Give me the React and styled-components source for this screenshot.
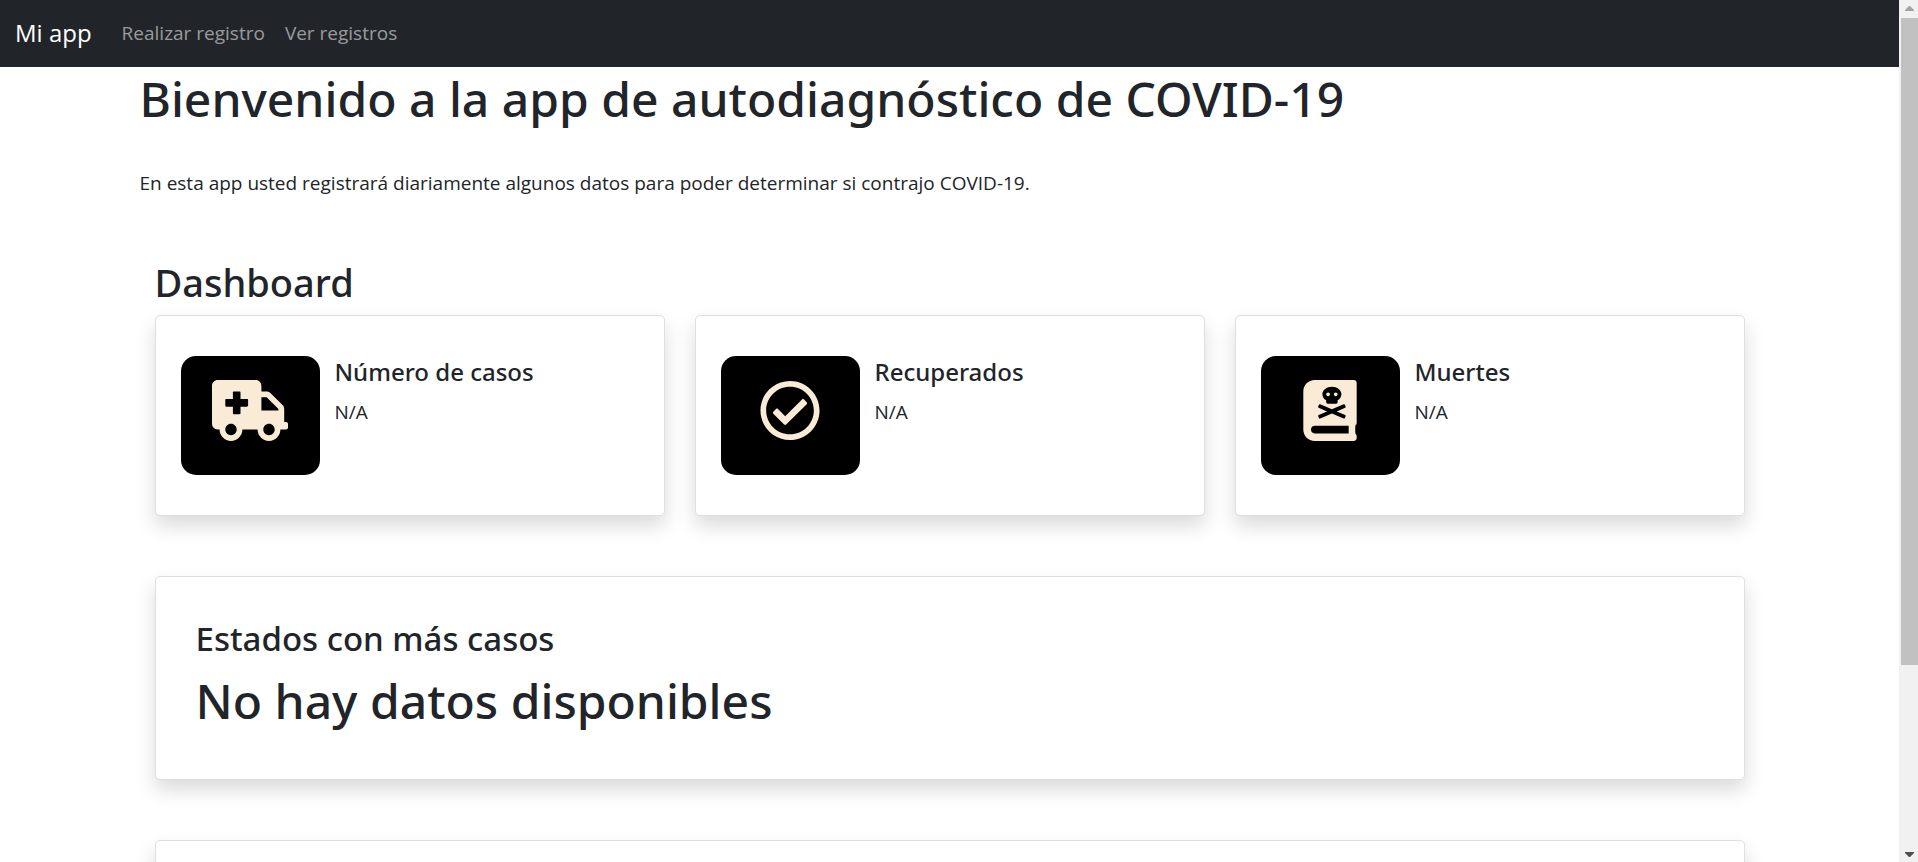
import React from "react";
import styled, { createGlobalStyle } from "styled-components";
import { FaAmbulance, FaBookDead, FaRegCheckCircle } from "react-icons/fa";

const GlobalStyle = createGlobalStyle`
  *, *::before, *::after { box-sizing: border-box; }
  body {
    margin: 0;
    background: #fff;
    color: #212529;
    font-family: "Segoe UI", "Open Sans", "Noto Sans", sans-serif;
    font-size: 19px;
    line-height: 32px;
  }
  h1, h2, h3, h5, p { margin: 0; }
  h1, h2, h3, h5 {
    font-family: "Segoe UI", "Noto Sans", "Open Sans", sans-serif;
    font-weight: 500;
  }
`;

const Shell = styled.div`
  display: grid;
  grid-template-columns: minmax(0, 1fr) 19px;
  height: 100vh;
  overflow: hidden;
`;

const Page = styled.div`
  height: 100vh;
  overflow: hidden;
`;

const Navbar = styled.nav`
  display: flex;
  align-items: center;
  gap: 30px;
  height: 67px;
  padding: 0 15px 2px;
  background: #212529;
`;

const Brand = styled.a`
  color: #fff;
  font-size: 24px;
  text-decoration: none;
`;

const NavLinks = styled.div`
  display: flex;
  gap: 20px;
`;

const NavLink = styled.a`
  color: rgba(255, 255, 255, 0.55);
  text-decoration: none;
`;

const Container = styled.main`
  max-width: 1650px;
  margin: 0 auto;
  padding: 0 15px;
`;

const Title = styled.h1`
  font-size: 48px;
  line-height: 64px;
`;

const Intro = styled.p`
  padding: 36px 0 58px;
`;

const Dashboard = styled.section`
  padding: 0 15px;
`;

const SectionTitle = styled.h2`
  margin-bottom: 8px;
  font-size: 38px;
  line-height: 50px;
`;

const StatGrid = styled.div`
  display: grid;
  grid-template-columns: repeat(3, minmax(0, 1fr));
  gap: 30px;
  margin-bottom: 60px;
`;

const Card = styled.article`
  padding: 40px;
  background: #fff;
  border: 1px solid #dfdfdf;
  border-radius: 5px;
  box-shadow: 0 10px 20px rgba(0, 0, 0, 0.15);
`;

const StatCard = styled(Card)`
  display: flex;
  gap: 15px;
  padding: 40px 25px;
`;

const IconTile = styled.div`
  display: flex;
  justify-content: center;
  width: 139px;
  height: 119px;
  padding-top: 24px;
  background: #000;
  border-radius: 15px;
  color: #faebd7;

  svg {
    width: 76px;
    height: 61px;
  }
`;

const StatName = styled.h5`
  margin-bottom: 8px;
  font-size: 24px;
  line-height: 32px;
`;

const PanelTitle = styled.h3`
  margin-bottom: 8px;
  font-size: 33px;
  line-height: 44px;
`;

const Panel = styled(Card)`
  min-height: 204px;
  margin-bottom: 60px;
`;

const Scrollbar = styled.div`
  display: flex;
  flex-direction: column;
  align-items: center;
  justify-content: space-between;
  padding: 6px 0 5px 2px;
  background: #f1f1f1;
`;

const Thumb = styled.div`
  width: 17px;
  height: 76%;
  margin: 7px 0 auto;
  background: #c1c1c1;
`;

const Arrow = styled.svg`
  width: 9px;
  height: 5px;
  fill: ${(p) => p.$color};
`;

const stats = [
  { name: "Número de casos", value: "N/A", Icon: FaAmbulance },
  { name: "Recuperados", value: "N/A", Icon: FaRegCheckCircle },
  { name: "Muertes", value: "N/A", Icon: FaBookDead },
];

export default function App() {
  return (
    <Shell>
      <GlobalStyle />
      <Page>
        <Navbar>
          <Brand href="#">Mi app</Brand>
          <NavLinks>
            <NavLink href="#registro">Realizar registro</NavLink>
            <NavLink href="#registros">Ver registros</NavLink>
          </NavLinks>
        </Navbar>
        <Container>
          <Title>Bienvenido a la app de autodiagnóstico de COVID-19</Title>
          <Intro>
            En esta app usted registrará diariamente algunos datos para poder
            determinar si contrajo COVID-19.
          </Intro>
          <Dashboard>
            <SectionTitle>Dashboard</SectionTitle>
            <StatGrid>
              {stats.map(({ name, value, Icon }) => (
                <StatCard key={name}>
                  <IconTile>
                    <Icon aria-hidden="true" />
                  </IconTile>
                  <div>
                    <StatName>{name}</StatName>
                    <p>{value}</p>
                  </div>
                </StatCard>
              ))}
            </StatGrid>
            <Panel>
              <PanelTitle>Estados con más casos</PanelTitle>
              <Title>No hay datos disponibles</Title>
            </Panel>
            <Panel />
          </Dashboard>
        </Container>
      </Page>
      <Scrollbar aria-hidden="true">
        <Arrow viewBox="0 0 9 5" $color="#a3a3a3">
          <path d="M4 0h1l4 4v1H0V4z" />
        </Arrow>
        <Thumb />
        <Arrow viewBox="0 0 9 5" $color="#505050">
          <path d="M0 0h9v1L5 5H4L0 1z" />
        </Arrow>
      </Scrollbar>
    </Shell>
  );
}
